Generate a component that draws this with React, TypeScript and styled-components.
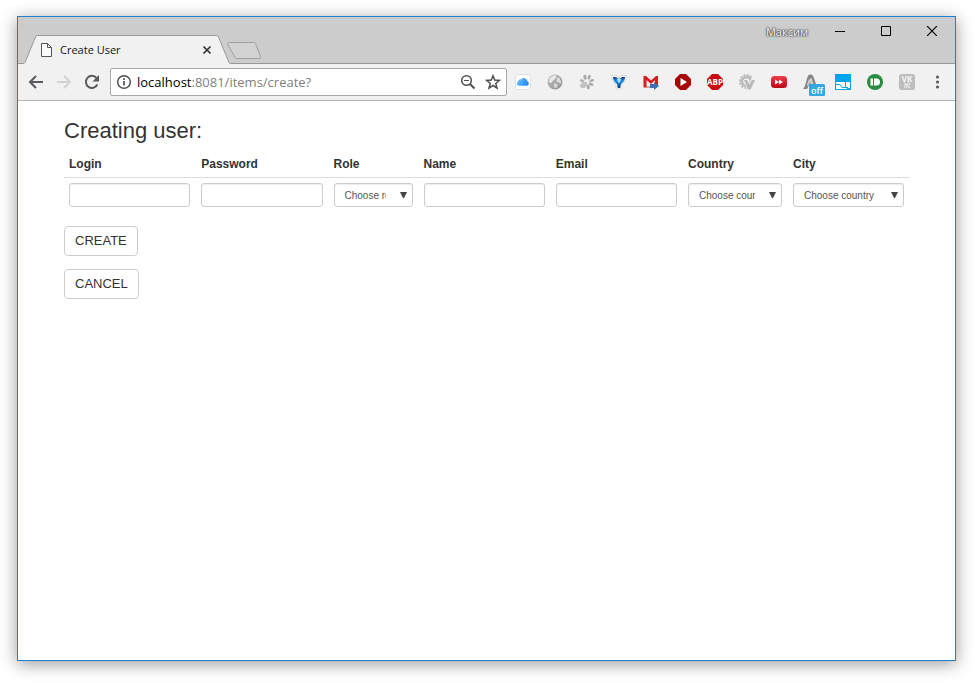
import React from "react";
import styled, { createGlobalStyle } from "styled-components";

const GlobalStyle = createGlobalStyle`
  * { box-sizing: border-box; }
  body { margin: 0; background: #fff; font-family: "Liberation Sans", Arial, sans-serif; color: #333; }
  button, input, select { font-family: inherit; }
`;

const Desktop = styled.div`
  display: flex;
  min-height: 100vh;
  padding: 16px 21px 22px 17px;
`;

const BrowserWindow = styled.div`
  display: flex;
  flex: 1;
  flex-direction: column;
  min-width: 0;
  border: 1px solid #1d80d1;
  background: #fff;
  box-shadow: 0 3px 16px rgba(0, 0, 0, 0.4);
`;

const TitleBar = styled.header`
  display: flex;
  align-items: flex-start;
  height: 47px;
  padding-left: 5px;
  border-bottom: 1px solid #999;
  background: #ccc;
  font-family: "Open Sans", "Noto Sans", sans-serif;
`;

const Tab = styled.div`
  position: relative;
  display: flex;
  align-items: center;
  width: 208px;
  height: 29px;
  margin-top: 18px;
  padding: 0 16px 0 18px;
  gap: 8px;
`;

const TabShape = styled.svg`
  position: absolute;
  inset: 0;
`;

const TabIcon = styled.svg`
  position: relative;
  flex: none;
`;

const TabTitle = styled.span`
  position: relative;
  flex: 1;
  color: #111;
  font-size: 11px;
  line-height: 16px;
`;

const PlainButton = styled.button<{ $width: number; $height: number }>`
  position: relative;
  display: flex;
  flex: none;
  align-items: center;
  justify-content: center;
  width: ${(p) => p.$width}px;
  height: ${(p) => p.$height}px;
  padding: 0;
  border: 0;
  background: none;
`;

const NewTabButton = styled(PlainButton)`
  margin: 24px auto 0 -5px;
`;

const Profile = styled.span`
  padding: 7px 9px 0 0;
  color: #fff;
  font-size: 11px;
  line-height: 16px;
  text-shadow: 0 0 1px #333, 0 0 2px #333, 0 0 2px #444;
`;

const Toolbar = styled.nav`
  display: flex;
  align-items: center;
  height: 37px;
  padding: 0 4px;
  border-bottom: 1px solid #b6b4b6;
  background: #f1f1f1;
`;

const AddressBar = styled.div`
  display: flex;
  flex: 1;
  align-items: center;
  min-width: 0;
  height: 28px;
  margin-left: 4px;
  padding: 0 1px 0 5px;
  border: 1px solid #a8a8a8;
  border-radius: 2px;
  background: #fff;
`;

const Url = styled.div`
  flex: 1;
  overflow: hidden;
  padding-left: 5px;
  color: #808080;
  font: 13px/20px "Open Sans", "Noto Sans", sans-serif;
  white-space: nowrap;
`;

const Host = styled.span`
  color: #000;
`;

const Page = styled.main`
  flex: 1;
  padding: 18px 45px 18px 46px;
`;

const Heading = styled.h1`
  margin: 0 0 7px;
  font-size: 22px;
  font-weight: 400;
  line-height: 24px;
`;

const Table = styled.table`
  width: 100%;
  border-collapse: collapse;
  table-layout: fixed;
`;

const HeadCell = styled.th<{ $width?: number }>`
  width: ${(p) => (p.$width ? `${p.$width}px` : "auto")};
  padding: 6px 5px 4px;
  border-bottom: 1px solid #ddd;
  font-size: 12px;
  line-height: 17px;
  text-align: left;
`;

const Cell = styled.td`
  padding: 5px 6px 5px 5px;
`;

const TextField = styled.input`
  display: block;
  width: 100%;
  height: 24px;
  padding: 3px 10px;
  border: 1px solid #ccc;
  border-radius: 3px;
  box-shadow: inset 0 1px 1px rgba(0, 0, 0, 0.075);
  font-size: 12px;
`;

const SelectBox = styled.div`
  position: relative;
`;

const Select = styled.select`
  display: block;
  width: 100%;
  height: 24px;
  padding: 0 26px 0 10px;
  appearance: none;
  border: 1px solid #ccc;
  border-radius: 3px;
  background: #fff;
  box-shadow: inset 0 1px 1px rgba(0, 0, 0, 0.075);
  color: #555;
  font-size: 10px;
`;

const SelectArrow = styled.svg`
  position: absolute;
  top: 8px;
  right: 6px;
  pointer-events: none;
`;

const Actions = styled.div`
  display: flex;
  flex-direction: column;
  align-items: flex-start;
  gap: 13px;
  margin-top: 14px;
`;

const ActionButton = styled.button`
  height: 30px;
  padding: 0 10px;
  border: 1px solid #ccc;
  border-radius: 4px;
  background: #fff;
  color: #333;
  font-size: 13px;
  line-height: 18px;
`;

const icon = { width: 16, height: 16, viewBox: "0 0 16 16", "aria-hidden": true } as const;

const extensions: { name: string; art: React.ReactNode }[] = [
  {
    name: "iCloud",
    art: (
      <svg {...icon}>
        <defs>
          <linearGradient id="cloud" x1="0" x2="1" y2=".4">
            <stop stopColor="#6cc8fc" />
            <stop offset="1" stopColor="#258df5" />
          </linearGradient>
        </defs>
        <rect x=".5" y=".5" width="15" height="15" rx="2" fill="#fff" stroke="#e0e0e0" />
        <path d="M4 11.800a2.300 2.300 0 0 1-.8-4.400A2 2 0 0 1 6 5.500a3.500 3.500 0 0 1 6.300 1.600A2.500 2.500 0 0 1 12 11.800z" fill="url(#cloud)" />
      </svg>
    ),
  },
  {
    name: "Globe",
    art: (
      <svg {...icon}>
        <defs>
          <linearGradient id="globe" x1="0" x2="1" y2="1">
            <stop stopColor="#c2c2c2" />
            <stop offset="1" stopColor="#8f8f8f" />
          </linearGradient>
        </defs>
        <circle cx="8" cy="8" r="7.500" fill="url(#globe)" />
        <path d="M5 2.500 8 1l1.500 1.500L8 5 6 6.500 4.500 9 2 8l.5-3.500z" fill="#e9e9e9" />
        <path d="M10 3.500 12.500 4l1.700 4-1.200 2.500-1-2-2.500-.5z" fill="#dcdcdc" />
        <path d="m7 9 4 1.500L9.500 14 7 13.500z" fill="#d8d8d8" />
      </svg>
    ),
  },
  {
    name: "Paw",
    art: (
      <svg {...icon} fill="#aaa">
        <ellipse cx="6" cy="3.200" rx="1.600" ry="2.600" transform="rotate(-10 6 3.200)" />
        <ellipse cx="10.200" cy="3.200" rx="1.500" ry="2.600" transform="rotate(16 10.200 3.200)" />
        <ellipse cx="3.200" cy="6.800" rx="2.500" ry="1.500" transform="rotate(25 3.200 6.800)" fill="#b4b4b4" />
        <ellipse cx="12.700" cy="6.500" rx="2.500" ry="1.400" transform="rotate(-18 12.700 6.500)" />
        <path d="M6 8c2-1 2.500.5 2 2.500S6.500 14 4 14s-3.500-1.500-3-3S4 9 6 8z" fill="#c0c0c0" />
        <ellipse cx="12" cy="10.200" rx="2.700" ry="1.400" transform="rotate(22 12 10.200)" />
        <ellipse cx="9.200" cy="13" rx="1.500" ry="2.500" transform="rotate(-5 9.200 13)" />
      </svg>
    ),
  },
  {
    name: "Y bookmark",
    art: (
      <svg {...icon}>
        <defs>
          <linearGradient id="bookmark" x2="0" y2="1">
            <stop stopColor="#0d397e" />
            <stop offset=".35" stopColor="#1e91ea" />
            <stop offset="1" stopColor="#063e7b" />
          </linearGradient>
        </defs>
        <path d="M1 1.500h5L8 4l2-2.500h5c.3 4-1 6.500-4 9v4.500H5v-4.500c-3-2.500-4.300-5-4-9z" fill="#fff" stroke="#d9d9d9" />
        <path d="M2 3h3l3 2 3-2h3c0 3-1.300 5-4 7l-.7 4H6.700L6 10C3.300 8 2 6 2 3z" fill="url(#bookmark)" />
        <path d="M5.500 4.500C7 5 9 5 10.500 4.500L8.500 9h-1z" fill="#a7dcff" />
      </svg>
    ),
  },
  {
    name: "Mail",
    art: (
      <svg {...icon}>
        <rect x=".5" y="2" width="14.500" height="11.500" fill="#f8eeee" />
        <path d="M.5 13.500V2H3l5 4.500L13 2h2v10h-3V6.300L8 10 3.500 6v7.500z" fill="#d51f1f" />
        <path d="M3 13h7" stroke="#df5555" />
        <path d="M7 10h4V8l5 4-5 4v-2H7z" fill="#426db5" />
      </svg>
    ),
  },
  {
    name: "Player",
    art: (
      <svg {...icon}>
        <path d="M5 0h6l5 5v6l-5 5H5l-5-5V5z" fill="#aa0505" />
        <path d="M5.500 4v8l6.500-4z" fill="#fff" />
      </svg>
    ),
  },
  {
    name: "Adblock",
    art: (
      <svg {...icon}>
        <path d="M5 0h6l5 5v6l-5 5H5l-5-5V5z" fill="#c70d10" />
        <text x="8" y="11" textAnchor="middle" fill="#fff" fontSize="8" fontWeight="700" fontFamily="Open Sans, sans-serif">ABP</text>
      </svg>
    ),
  },
  {
    name: "Gear",
    art: (
      <svg {...icon}>
        <circle cx="7.500" cy="7.500" r="4.500" fill="none" stroke="#bcbcbc" strokeWidth="3" />
        <circle cx="7.500" cy="7.500" r="6.600" fill="none" stroke="#bcbcbc" strokeWidth="1.800" strokeDasharray="2.100 1.350" />
        <path d="M6 5.500 10.200 14l5-9.500" fill="none" stroke="#f1f1f1" strokeWidth="4.500" />
        <path d="M5 6h3l2.200 4.500L13 6h3l-4.500 9.500H9z" fill="#b8b8b8" />
      </svg>
    ),
  },
  {
    name: "Fast forward",
    art: (
      <svg {...icon}>
        <defs>
          <linearGradient id="red" x2="0" y2="1">
            <stop stopColor="#ef3d48" />
            <stop offset="1" stopColor="#b80813" />
          </linearGradient>
        </defs>
        <rect y="2" width="16" height="12" rx="3.500" fill="url(#red)" />
        <path d="m4 5.500 4 2.500-4 2.500zm4 0 4 2.500-4 2.500z" fill="#fff" />
      </svg>
    ),
  },
  {
    name: "Switch, off",
    art: (
      <svg width="28" height="28" viewBox="0 0 28 28" aria-hidden="true">
        <path d="M6 21c3-3 3-9 5-13 1-2 4-2 5 0 2 4 3 10 6 13H13l-1-4-2 4z" fill="#858585" />
        <path d="M10 18c0-4 2-7 4.500-8.500L17 18h-3l-.5-4-2.500 4z" fill="#cecece" />
        <rect x="12" y="16" width="16" height="12" rx="1.500" fill="#35a8e2" />
        <text x="20" y="26" textAnchor="middle" fill="#fff" fontSize="9" fontWeight="600" fontFamily="Open Sans, sans-serif">off</text>
      </svg>
    ),
  },
  {
    name: "Panels",
    art: (
      <svg {...icon}>
        <path d="M0 0h16v16H0z" fill="#00a6ed" />
        <path d="M1 8h9v4q0 1.500 2 2.500v.5H1z" fill="#fff" />
        <path d="M11 8h4v6h-2.500q-1.500-.7-1.500-2z" fill="#fff" />
        <path d="M1 10.500h3.500q1 0 1.500 1.500t2 1.500H13" fill="none" stroke="#00a6ed" />
      </svg>
    ),
  },
  {
    name: "Pushbullet",
    art: (
      <svg {...icon}>
        <circle cx="8" cy="8" r="8" fill="#298d40" />
        <path d="M3.500 4.500H6v7H3.500zM7 4.500h2.500a3.500 3.500 0 0 1 0 7H7z" fill="#fff" />
      </svg>
    ),
  },
  {
    name: "VK",
    art: (
      <svg {...icon}>
        <rect width="16" height="16" rx="2.500" fill="#bdbdbd" />
        <text x="8" y="8" textAnchor="middle" fill="#f8f8f8" fontSize="8" fontWeight="700" fontFamily="Open Sans, sans-serif">VK</text>
        <path d="m5 9 6 5" stroke="#eee" strokeWidth="1.200" />
        <circle cx="9.700" cy="10" r="1.300" fill="none" stroke="#eee" />
        <circle cx="6.700" cy="12.700" r="1.300" fill="none" stroke="#eee" />
      </svg>
    ),
  },
];

type Column = { label: string; width?: number; placeholder?: string; type?: string };

const columns: Column[] = [
  { label: "Login", type: "text" },
  { label: "Password", type: "password" },
  { label: "Role", width: 90, placeholder: "Choose role" },
  { label: "Name", type: "text" },
  { label: "Email", type: "email" },
  { label: "Country", width: 105, placeholder: "Choose country" },
  { label: "City", width: 122, placeholder: "Choose country" },
];

function BrowserTabs() {
  return (
    <TitleBar>
      <Tab>
        <TabShape width="208" height="29" viewBox="0 0 208 29" aria-hidden="true">
          <path d="M0 28.500q1.500 0 2-1L12.500 2q.6-1.500 2-1.500h179q1.400 0 2 1.500L206 27.500q.5 1 2 1V29H0z" fill="#f1f1f1" />
          <path d="M0 28.500q1.500 0 2-1L12.500 2q.6-1.500 2-1.500h179q1.400 0 2 1.500L206 27.500q.5 1 2 1" fill="none" stroke="#999" />
        </TabShape>
        <TabIcon width="11" height="14" viewBox="0 0 11 14" aria-hidden="true">
          <path d="M.5.5h6l4 4v9H.5zM6.500.5v4h4" fill="#fafafa" stroke="#555" />
        </TabIcon>
        <TabTitle>Create User</TabTitle>
        <PlainButton type="button" aria-label="Close tab" $width={16} $height={16}>
          <svg width="16" height="16" viewBox="0 0 16 16">
            <path d="m4.500 4.500 7 7m0-7-7 7" stroke="#333" strokeWidth="1.700" />
          </svg>
        </PlainButton>
      </Tab>
      <NewTabButton type="button" aria-label="New tab" $width={36} $height={20}>
        <svg width="36" height="20" viewBox="0 0 36 20">
          <path d="M2.500 1.500h25q1.500 0 2 1l5 13q.7 2-1 2H11q-1.500 0-2-1l-7-13q-.8-2 .5-2z" fill="#d2d2d2" stroke="#a0a0a0" />
        </svg>
      </NewTabButton>
      <Profile>Максим</Profile>
      <PlainButton type="button" aria-label="Minimize" $width={46} $height={28}>
        <svg width="10" height="10" viewBox="0 0 10 10"><path d="M0 5.500h10" stroke="#000" /></svg>
      </PlainButton>
      <PlainButton type="button" aria-label="Maximize" $width={46} $height={28}>
        <svg width="10" height="10" viewBox="0 0 10 10"><path d="M.5.5h9v9h-9z" fill="none" stroke="#000" /></svg>
      </PlainButton>
      <PlainButton type="button" aria-label="Close" $width={46} $height={28}>
        <svg width="10" height="10" viewBox="0 0 10 10"><path d="m0 0 10 10m0-10L0 10" stroke="#000" strokeWidth="1.200" /></svg>
      </PlainButton>
    </TitleBar>
  );
}

function BrowserToolbar() {
  return (
    <Toolbar>
      <PlainButton type="button" aria-label="Back" $width={28} $height={28}>
        <svg {...icon}><path d="M15 8H2m6-6L2 8l6 6" fill="none" stroke="#5a5a5f" strokeWidth="2" /></svg>
      </PlainButton>
      <PlainButton type="button" aria-label="Forward" disabled $width={28} $height={28}>
        <svg {...icon}><path d="M1 8h13M8 2l6 6-6 6" fill="none" stroke="#d3d3d3" strokeWidth="2" /></svg>
      </PlainButton>
      <PlainButton type="button" aria-label="Reload" $width={28} $height={28}>
        <svg {...icon}>
          <path d="M13.300 10.500A6 6 0 1 1 12.500 4" fill="none" stroke="#5a5a5f" strokeWidth="2" />
          <path d="M15 1v6.500H8.500z" fill="#5a5a5f" />
        </svg>
      </PlainButton>
      <AddressBar>
        <svg {...icon}>
          <circle cx="8" cy="8" r="6.300" fill="none" stroke="#505050" strokeWidth="1.500" />
          <path d="M8 7v4.500M8 4.200v1.700" stroke="#505050" strokeWidth="1.700" />
        </svg>
        <Url><Host>localhost</Host>:8081/items/create?</Url>
        <PlainButton type="button" aria-label="Zoom" $width={25} $height={24}>
          <svg {...icon} fill="none" stroke="#505050">
            <circle cx="6.500" cy="6.500" r="4.800" strokeWidth="1.500" />
            <path d="m10 10 4.500 4.500" strokeWidth="2" />
            <path d="M4 6.500h5" />
          </svg>
        </PlainButton>
        <PlainButton type="button" aria-label="Bookmark" $width={25} $height={24}>
          <svg {...icon}>
            <path d="m8 1.800 1.700 4.300 4.700.3-3.600 3 1.200 4.600-4-2.500L4 14l1.200-4.600-3.600-3 4.700-.3z" fill="none" stroke="#505050" strokeWidth="1.500" />
          </svg>
        </PlainButton>
      </AddressBar>
      {extensions.map((extension) => (
        <PlainButton key={extension.name} type="button" aria-label={extension.name} $width={32} $height={28}>
          {extension.art}
        </PlainButton>
      ))}
      <PlainButton type="button" aria-label="Menu" $width={28} $height={28}>
        <svg {...icon} fill="#5a5a5f">
          <circle cx="8.500" cy="3" r="1.600" />
          <circle cx="8.500" cy="8" r="1.600" />
          <circle cx="8.500" cy="13" r="1.600" />
        </svg>
      </PlainButton>
    </Toolbar>
  );
}

function Field({ column }: { column: Column }) {
  if (!column.placeholder) {
    return <TextField type={column.type} aria-labelledby={`head-${column.label}`} />;
  }
  return (
    <SelectBox>
      <Select aria-labelledby={`head-${column.label}`}>
        <option>{column.placeholder}</option>
      </Select>
      <SelectArrow width="7" height="8" viewBox="0 0 7 8" aria-hidden="true">
        <path d="M0 1h7L4 7H3z" fill="#444" />
      </SelectArrow>
    </SelectBox>
  );
}

export default function App() {
  return (
    <>
      <GlobalStyle />
      <Desktop>
        <BrowserWindow>
          <BrowserTabs />
          <BrowserToolbar />
          <Page>
            <Heading>Creating user:</Heading>
            <form onSubmit={(event) => event.preventDefault()}>
              <Table>
                <thead>
                  <tr>
                    {columns.map((column) => (
                      <HeadCell key={column.label} id={`head-${column.label}`} scope="col" $width={column.width}>
                        {column.label}
                      </HeadCell>
                    ))}
                  </tr>
                </thead>
                <tbody>
                  <tr>
                    {columns.map((column) => (
                      <Cell key={column.label}>
                        <Field column={column} />
                      </Cell>
                    ))}
                  </tr>
                </tbody>
              </Table>
              <Actions>
                <ActionButton type="submit">CREATE</ActionButton>
                <ActionButton type="button">CANCEL</ActionButton>
              </Actions>
            </form>
          </Page>
        </BrowserWindow>
      </Desktop>
    </>
  );
}
